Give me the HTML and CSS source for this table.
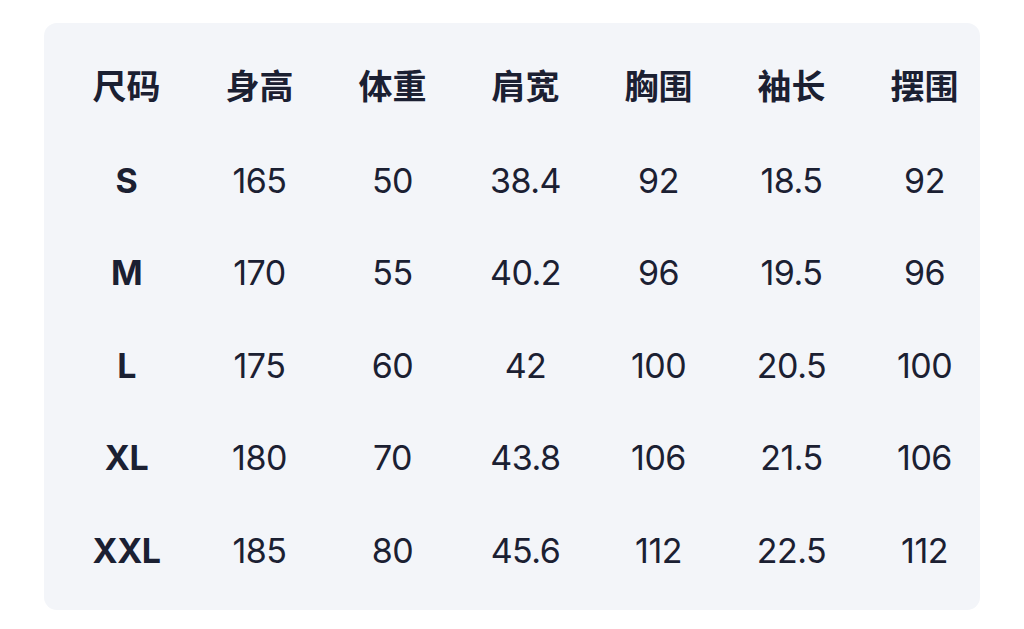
FILE: index.html
```html
<!DOCTYPE html>
<html lang="zh">
<head>
<meta charset="utf-8">
<link rel="stylesheet" href="styles.css">
</head>
<body>
<div class="card">
  <div class="grid">
    <div class="cell head">尺码</div><div class="cell head">身高</div><div class="cell head">体重</div><div class="cell head">肩宽</div><div class="cell head">胸围</div><div class="cell head">袖长</div><div class="cell head">摆围</div>
    <div class="cell size">S</div><div class="cell">165</div><div class="cell">50</div><div class="cell">38.4</div><div class="cell">92</div><div class="cell">18.5</div><div class="cell">92</div>
    <div class="cell size">M</div><div class="cell">170</div><div class="cell">55</div><div class="cell">40.2</div><div class="cell">96</div><div class="cell">19.5</div><div class="cell">96</div>
    <div class="cell size">L</div><div class="cell">175</div><div class="cell">60</div><div class="cell">42</div><div class="cell">100</div><div class="cell">20.5</div><div class="cell">100</div>
    <div class="cell size">XL</div><div class="cell">180</div><div class="cell">70</div><div class="cell">43.8</div><div class="cell">106</div><div class="cell">21.5</div><div class="cell">106</div>
    <div class="cell size">XXL</div><div class="cell">185</div><div class="cell">80</div><div class="cell">45.6</div><div class="cell">112</div><div class="cell">22.5</div><div class="cell">112</div>
  </div>
</div>
</body>
</html>
```
FILE: styles.css
```css
html, body {
  margin: 0;
  padding: 0;
  background: #ffffff;
}
body {
  padding: 23px 0 0 44px;
  font-family: Inter, "Liberation Sans", "Noto Sans CJK SC", sans-serif;
  color: #1b2032;
}
.card {
  box-sizing: border-box;
  width: 936px;
  height: 587px;
  background: #f3f5f9;
  border-radius: 13px;
  padding: 19px 0 0 16px;
}
.grid {
  display: grid;
  grid-template-columns: repeat(7, 133px);
  grid-auto-rows: 92.4px;
}
.cell {
  display: flex;
  align-items: center;
  justify-content: center;
  font-size: 34px;
  font-weight: 400;
  letter-spacing: -0.5px;
}
.head {
  box-sizing: border-box;
  padding-bottom: 8px;
  font-family: "Noto Sans CJK SC", sans-serif;
  font-weight: 700;
  letter-spacing: 0;
}
.size {
  font-weight: 700;
}
```
